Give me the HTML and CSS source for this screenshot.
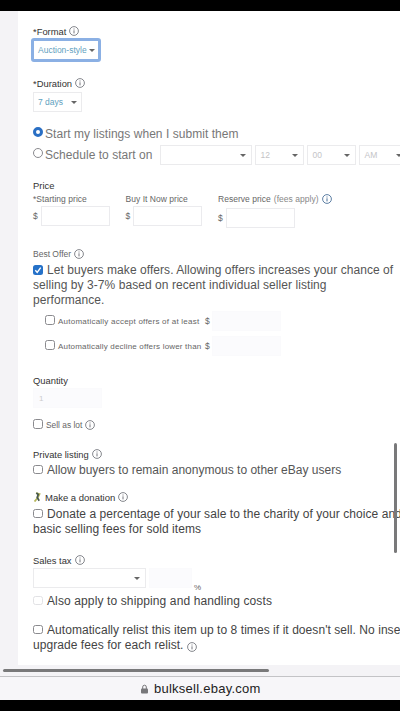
FILE: index.html
```html
<!DOCTYPE html>
<html lang="en">
<head>
    <meta charset="UTF-8">
    <meta name="viewport" content="width=device-width, initial-scale=1.0">
    <title>Bulk listing</title>
    <link rel="stylesheet" href="styles.css">
</head>
<body>
    <svg class="defs" width="0" height="0">
        <symbol id="info" viewBox="0 0 10 10">
            <circle cx="5" cy="5" r="4.4" fill="none" stroke="currentColor" stroke-width="0.8"/>
            <path d="M5 4.3v3.1M5 2.5v1" stroke="currentColor" stroke-width="0.9"/>
        </symbol>
    </svg>
    <div class="phone">
        <div class="page">
            <form class="form">
                <section class="format">
                    <div class="heading"><span>*Format</span><svg class="info"><use href="#info"/></svg></div>
                    <div class="select focused"><span>Auction-style</span><i class="caret"></i></div>
                </section>

                <section class="duration">
                    <div class="heading"><span>*Duration</span><svg class="info"><use href="#info"/></svg></div>
                    <div class="select days"><span>7 days</span><i class="caret"></i></div>
                </section>

                <section class="schedule">
                    <div class="option"><i class="radio checked"></i><span>Start my listings when I submit them</span></div>
                    <div class="option second">
                        <i class="radio"></i><span>Schedule to start on</span>
                        <div class="selects">
                            <div class="select date"><i class="caret"></i></div>
                            <div class="select time"><span>12</span><i class="caret"></i></div>
                            <div class="select time"><span>00</span><i class="caret"></i></div>
                            <div class="select time"><span>AM</span><i class="caret"></i></div>
                        </div>
                    </div>
                </section>

                <section class="price">
                    <div class="heading"><span>Price</span></div>
                    <div class="prices">
                        <div class="price-field">
                            <div class="label"><span>*Starting price</span></div>
                            <div class="money"><span>$</span><div class="input"></div></div>
                        </div>
                        <div class="price-field">
                            <div class="label"><span>Buy It Now price</span></div>
                            <div class="money"><span>$</span><div class="input"></div></div>
                        </div>
                        <div class="price-field reserve">
                            <div class="label"><span>Reserve price</span><span class="fees">(fees apply)</span><svg class="info blue"><use href="#info"/></svg></div>
                            <div class="money"><span>$</span><div class="input"></div></div>
                        </div>
                    </div>
                </section>

                <section class="offer">
                    <div class="heading light"><span>Best Offer</span><svg class="info"><use href="#info"/></svg></div>
                    <div class="paragraph">
                        <div class="line"><i class="check checked"><svg viewBox="0 0 10 10"><path d="M2.3 5.3l1.9 2.1 3.5-4.8"/></svg></i><span>Let buyers make offers. Allowing offers increases your chance of</span></div>
                        <div class="line"><span>selling by 3-7% based on recent individual seller listing</span></div>
                        <div class="line"><span>performance.</span></div>
                    </div>
                    <div class="auto accept"><i class="check"></i><span>Automatically accept offers of at least</span><b>$</b><div class="input off"></div></div>
                    <div class="auto"><i class="check"></i><span>Automatically decline offers lower than</span><b>$</b><div class="input off"></div></div>
                </section>

                <section class="quantity">
                    <div class="heading"><span>Quantity</span></div>
                    <div class="input off">1</div>
                    <div class="lot"><i class="check"></i><span>Sell as lot</span><svg class="info"><use href="#info"/></svg></div>
                </section>

                <section class="private">
                    <div class="heading"><span>Private listing</span><svg class="info"><use href="#info"/></svg></div>
                    <div class="line"><i class="check"></i><span>Allow buyers to remain anonymous to other eBay users</span></div>
                </section>

                <section class="donation">
                    <div class="heading">
                        <svg class="ribbon" viewBox="0 0 8 10">
                            <path d="M3 1l3.5 1-2 4-3 3.5" fill="none" stroke="#b5b65a" stroke-width="1.8"/>
                            <path d="M3.4 1l1.8 1.5-1 3 2 3.3" fill="none" stroke="#47584e" stroke-width="1.7"/>
                        </svg>
                        <span>Make a donation</span><svg class="info"><use href="#info"/></svg>
                    </div>
                    <div class="line dark"><i class="check"></i><span>Donate a percentage of your sale to the charity of your choice and</span></div>
                    <div class="line dark"><span>basic selling fees for sold items</span></div>
                </section>

                <section class="tax">
                    <div class="heading"><span>Sales tax</span><svg class="info"><use href="#info"/></svg></div>
                    <div class="tax-row">
                        <div class="select state"><i class="caret"></i></div>
                        <div class="input off"></div>
                        <span class="percent">%</span>
                    </div>
                    <div class="line dark also"><i class="check disabled"></i><span>Also apply to shipping and handling costs</span></div>
                </section>

                <section class="relist">
                    <div class="line dark"><i class="check"></i><span>Automatically relist this item up to 8 times if it doesn't sell. No inser</span></div>
                    <div class="line dark"><span>upgrade fees for each relist.</span><svg class="info"><use href="#info"/></svg></div>
                </section>
            </form>
            <div class="scroll-y"></div>
            <div class="scroll-x"></div>
        </div>
        <div class="address">
            <svg class="lock" viewBox="0 0 7 10"><path d="M1.7 5V3a1.8 1.8 0 0 1 3.6 0v2" fill="none" stroke="#77777a"/><rect y="4.4" width="7" height="5.2" rx="1" fill="#77777a"/></svg>
            <span>bulksell.ebay.com</span>
        </div>
    </div>
</body>
</html>
```
FILE: styles.css
```css
* {
    box-sizing: border-box;
}
body {
    margin: 0;
    background: #000;
    color: #444;
    font-family: "Liberation Sans", Arial, sans-serif;
    font-size: 12px;
}
.defs {
    position: absolute;
}
.phone {
    width: 400px;
    height: 711px;
    padding-top: 11px;
    overflow: hidden;
}
.page {
    position: relative;
    height: 665px;
    padding-left: 18px;
    background: #f4f3f6;
    overflow: hidden;
}
.form {
    height: 654px;
    padding: 13px 0 0 15px;
    background: #fff;
    overflow: hidden;
}
span {
    white-space: nowrap;
    flex: none;
}
.heading {
    display: flex;
    align-items: center;
    height: 14px;
    font-size: 9.4px;
    color: #333;
}
.heading.light {
    font-size: 8.5px;
    color: #666;
}
.info {
    flex: none;
    width: 10px;
    height: 10px;
    margin-left: 3px;
    color: #666870;
}
.info.blue {
    color: #35608d;
}
.select {
    display: flex;
    align-items: center;
    flex: none;
    height: 20px;
    padding: 0 5px;
    border: 1px solid #ebebed;
    background: #fff;
    font-size: 8.5px;
    color: #c4c4c7;
}
.caret {
    margin-left: auto;
    border: 3px solid transparent;
    border-top: 3px solid #666;
    border-bottom: 0;
}
.input {
    flex: none;
    width: 69px;
    height: 20px;
    border: 1px solid #ebebee;
    background: #fff;
}
.input.off {
    border-color: #fafafc;
    background: #fbfbfd;
}

/* checkboxes and radios */
.check {
    flex: none;
    width: 10px;
    height: 9px;
    margin-right: 4px;
    border: 1px solid #8a8a8e;
    border-radius: 2.5px;
    background: #fff;
}
.check.checked {
    height: 10px;
    border: 0;
    background: #2571c8;
}
.check.checked svg {
    display: block;
    fill: none;
    stroke: #fff;
    stroke-width: 1.4;
}
.check.disabled {
    border-color: #e2e2e5;
}
.radio {
    flex: none;
    width: 10px;
    height: 10px;
    margin: 0 2px 5px 0;
    border: 1px solid #8a8a8e;
    border-radius: 50%;
}
.radio.checked {
    border: 3px solid #2a6fc4;
}
.line {
    display: flex;
    align-items: center;
    height: 15px;
    color: #555;
    letter-spacing: 0.06px;
}
.line.dark {
    color: #444;
}

.format {
    height: 52px;
}
.focused {
    width: 70px;
    height: 24px;
    margin-left: -2px;
    padding: 0 3px 0 4px;
    border: 3px solid #8bb0e4;
    border-radius: 3px;
    color: #5f9fc0;
}
.duration {
    height: 50px;
}
.days {
    width: 49px;
    margin-top: 2px;
    padding: 0 4px;
    color: #5f9fc0;
}
.schedule {
    height: 52px;
}
.option {
    display: flex;
    align-items: center;
    height: 16px;
    color: #777;
    letter-spacing: 0.04px;
}
.option.second {
    height: 20px;
    margin-top: 3px;
}
.selects {
    display: flex;
    gap: 3px;
    margin-left: 7px;
}
.date {
    width: 92px;
}
.time {
    width: 49px;
}
.price {
    height: 69px;
}
.prices {
    display: flex;
}
.price-field {
    width: 92.5px;
}
.label {
    display: flex;
    align-items: center;
    height: 14px;
    font-size: 8.5px;
    letter-spacing: 0.03px;
    color: #666;
}
.fees {
    margin-left: 3px;
    color: #888;
}
.money {
    display: flex;
    align-items: center;
    font-size: 8.5px;
    color: #666;
}
.money span {
    width: 7.5px;
}
.reserve .money {
    margin-top: 2px;
}
.offer {
    height: 126px;
}
.paragraph {
    margin: 1px 0 4px;
}
.auto {
    display: flex;
    align-items: center;
    height: 20px;
    margin: 0 0 5px 12px;
    font-size: 8px;
    letter-spacing: 0.18px;
    color: #666;
}
.auto .check,
.lot .check {
    height: 10px;
    margin-right: 3px;
    margin-bottom: 3px;
}
.auto span {
    width: 147px;
}
.accept span {
    letter-spacing: 0.23px;
}
.auto b {
    width: 7px;
    font-size: 8.5px;
    font-weight: normal;
}
.quantity {
    height: 74px;
}
.quantity .input {
    margin-top: 1px;
    padding: 6px 5px;
    font-size: 8px;
    line-height: 8px;
    color: #ccc;
}
.lot {
    display: flex;
    align-items: center;
    height: 16px;
    margin-top: 9px;
    font-size: 8.4px;
    color: #666;
}
.private {
    height: 43px;
}
.private .line {
    margin-top: 1px;
    letter-spacing: 0;
}
.donation {
    height: 63px;
}
.donation .heading {
    margin-bottom: 2px;
    font-size: 9.5px;
}
.ribbon {
    width: 8px;
    height: 10px;
    margin-right: 4px;
}
.tax {
    height: 69px;
}
.tax-row {
    display: flex;
    height: 25px;
    margin-top: 1px;
}
.state {
    width: 113px;
}
.tax .input {
    width: 43px;
    margin: 0 2px 0 3px;
}
.percent {
    align-self: flex-end;
    font-size: 8px;
    line-height: 10px;
    color: #666;
}
.also {
    letter-spacing: 0.12px;
}
.relist .info {
    margin-top: 4px;
}

/* scrollbars */
.scroll-y,
.scroll-x {
    position: absolute;
    border-radius: 2px;
    background: #79797a;
}
.scroll-y {
    top: 432px;
    right: 3px;
    width: 3px;
    height: 110px;
}
.scroll-x {
    left: 3px;
    bottom: 4px;
    width: 266px;
    height: 3px;
}
.address {
    display: flex;
    align-items: center;
    height: 24px;
    padding-left: 141px;
    border-top: 1px solid #c3c3c6;
    background: #f7f6f9;
    color: #222;
    font-size: 13px;
    letter-spacing: 0.25px;
}
.lock {
    width: 7px;
    height: 10px;
    margin-right: 6px;
}
```
